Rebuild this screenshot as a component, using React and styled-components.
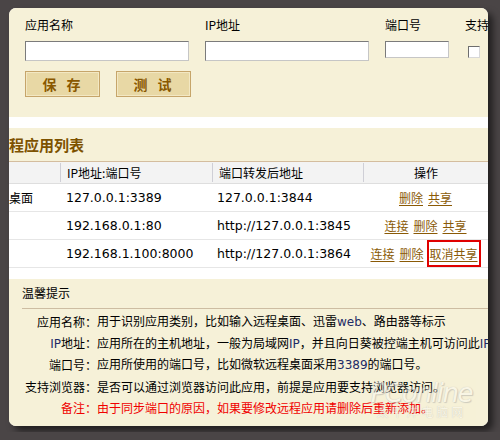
import React from "react";
import styled, { createGlobalStyle } from "styled-components";

const Global = createGlobalStyle`
  html, body { margin: 0; padding: 0; background: #4a4546; }
  body { font-family: "DejaVu Sans", "Noto Sans CJK SC", sans-serif; font-size: 12px; color: #000; }
  #root { padding: 8px 0 0 9px; height: 432px; box-sizing: border-box; overflow: hidden; }
`;

const CJK = `"Noto Sans CJK SC", "DejaVu Sans", sans-serif`;
const LATIN = `"DejaVu Sans", "Noto Sans CJK SC", sans-serif`;
const CREAM = "#f6f1d8";

const Card = styled.div`
  position: relative;
  width: 479px;
  height: 418px;
  border-radius: 7px;
  overflow: hidden;
  background: #fff;
  box-shadow: 5px 5px 7px rgba(0, 0, 0, 0.55);
  display: flex;
  flex-direction: column;
`;

const FormPanel = styled.div`
  height: 109px;
  flex: none;
  box-sizing: border-box;
  background: ${CREAM};
  padding: 9px 0 0 16px;
  display: flex;
  flex-direction: column;
  gap: 10px;
`;

const FieldRow = styled.div`
  display: flex;
  gap: 16px;
  white-space: nowrap;
`;

const Field = styled.div`
  display: flex;
  flex-direction: column;
  gap: 8px;
  align-items: ${(p) => (p.$center ? "flex-start" : "stretch")};
`;

const Label = styled.div`
  font-family: ${CJK};
  font-size: 12px;
  line-height: 16px;
  height: 16px;
`;

const Input = styled.div`
  width: ${(p) => p.$w}px;
  height: ${(p) => p.$h}px;
  box-sizing: border-box;
  background: #fff;
  border: 1px solid;
  border-color: #7b7b7b #c6c6c6 #c6c6c6 #7b7b7b;
`;

const Check = styled.div`
  width: 12px;
  height: 12px;
  margin: 5px 0 0 3px;
  box-sizing: border-box;
  background: #fff;
  border: 1px solid;
  border-color: #6e6e6e #d8d8d8 #d8d8d8 #6e6e6e;
`;

const ButtonRow = styled.div`
  display: flex;
  gap: 16px;
`;

const Button = styled.div`
  width: 75px;
  height: 26px;
  box-sizing: border-box;
  border: 1px solid #c6a56a;
  background: #e8d8a5;
  box-shadow: inset 0 0 0 1px #f3e8c3;
  display: flex;
  align-items: center;
  justify-content: center;
  font-family: ${CJK};
  font-weight: 700;
  font-size: 14px;
  color: #8a5800;
  letter-spacing: 10px;
  padding-left: 8px;
`;

const Heading = styled.div`
  margin-top: 11px;
  margin-left: -29px;
  height: 33px;
  flex: none;
  background: ${CREAM};
  border-bottom: 1px solid #d4bd9e;
  padding-left: 14px;
  display: flex;
  align-items: center;
  font-family: ${CJK};
  font-weight: 700;
  font-size: 15px;
  color: #7d5200;
  white-space: nowrap;
`;

const Table = styled.div`
  margin-left: -29px;
  width: 508px;
  flex: none;
`;

const HeadRow = styled.div`
  display: grid;
  grid-template-columns: 80px 152px 151px 125px;
  height: 21px;
  background: #f3f3f3;
  border-bottom: 1px solid #dedede;
`;

const HeadCell = styled.div`
  display: flex;
  align-items: center;
  justify-content: ${(p) => (p.$center ? "center" : "flex-start")};
  padding-left: ${(p) => (p.$center ? 0 : 6)}px;
  border-left: ${(p) => (p.$first ? "none" : "1px solid #cfcfd6")};
  margin: 1px 0;
  font-family: ${CJK};
  font-size: 12px;
  white-space: nowrap;
`;

const Row = styled.div`
  display: grid;
  grid-template-columns: 80px 152px 151px 125px;
  height: 27px;
  border-bottom: 1px solid #e6e6e6;
  background: #fff;
`;

const Cell = styled.div`
  display: flex;
  align-items: center;
  justify-content: ${(p) => (p.$center ? "center" : "flex-start")};
  padding-left: ${(p) => (p.$center ? 0 : p.$pl ?? 6)}px;
  font-family: ${LATIN};
  font-size: 12.5px;
  white-space: nowrap;
  gap: 5px;
`;

const CjkText = styled.span`
  font-family: ${CJK};
  font-size: 12px;
`;

const Link = styled.span`
  font-family: ${CJK};
  font-size: 12px;
  color: #8a5a06;
  text-decoration: underline;
  text-underline-offset: 2px;
  ${(p) =>
    p.$marked &&
    `
    display: inline-block;
    border: 2px solid #e00000;
    padding: 0 1px;
    line-height: 23px;
    margin-left: -2px;
  `}
`;

const Tips = styled.div`
  margin-top: 11px;
  flex: 1;
  background: ${CREAM};
  padding: 4px 0 0 13px;
  white-space: nowrap;
`;

const TipsTitle = styled.div`
  font-family: ${CJK};
  font-size: 12px;
  line-height: 20px;
  padding-bottom: 5px;
  border-bottom: 1px solid #cdbda2;
  margin-bottom: 2px;
`;

const TipLine = styled.div`
  display: grid;
  grid-template-columns: 75px auto;
  align-items: center;
  height: 21.6px;
  line-height: 16px;
  font-family: ${CJK};
  font-size: 12px;
  color: ${(p) => (p.$red ? "#f00000" : "#000")};
`;

const TipLabel = styled.span`
  text-align: right;
`;

const Latin = styled.span`
  font-family: ${LATIN};
  color: #1d2a66;
`;

const Watermark = styled.div`
  position: absolute;
  right: 16px;
  bottom: 6px;
  display: flex;
  flex-direction: column;
  align-items: center;
  opacity: 0.45;
  pointer-events: none;
`;

const WmBig = styled.div`
  font-family: "DejaVu Sans", sans-serif;
  font-style: italic;
  font-size: 26px;
  letter-spacing: -1.5px;
  color: #fbfbf6;
  text-shadow: 0 0 1px #8a8a8a, 1px 1px 1px #a0a0a0;
`;

const WmSmall = styled.div`
  font-family: ${CJK};
  font-size: 12px;
  letter-spacing: 3px;
  color: #fbfbf6;
  text-shadow: 0 0 1px #8a8a8a;
  margin-top: -5px;
`;

const rows = [
  { name: "远程桌面", ip: "127.0.0.1:3389", fwd: "127.0.0.1:3844", ops: ["删除", "共享"] },
  { name: "", ip: "192.168.0.1:80", fwd: "http://127.0.0.1:3845", ops: ["连接", "删除", "共享"] },
  { name: "", ip: "192.168.1.100:8000", fwd: "http://127.0.0.1:3864", ops: ["连接", "删除", "取消共享"], mark: 2 },
];

export default function App() {
  return (
    <>
      <Global />
      <Card>
        <FormPanel>
          <FieldRow>
            <Field>
              <Label>应用名称</Label>
              <Input $w={164} $h={20} />
            </Field>
            <Field>
              <Label>IP地址</Label>
              <Input $w={164} $h={20} />
            </Field>
            <Field>
              <Label>端口号</Label>
              <Input $w={64} $h={17} />
            </Field>
            <Field $center>
              <Label>支持浏览器</Label>
              <Check />
            </Field>
          </FieldRow>
          <ButtonRow>
            <Button>保存</Button>
            <Button>测试</Button>
          </ButtonRow>
        </FormPanel>

        <Heading>远程应用列表</Heading>

        <Table>
          <HeadRow>
            <HeadCell $first />
            <HeadCell>IP地址:端口号</HeadCell>
            <HeadCell>端口转发后地址</HeadCell>
            <HeadCell $center>操作</HeadCell>
          </HeadRow>
          {rows.map((r, i) => (
            <Row key={i}>
              <Cell $pl={5}>
                <CjkText>{r.name}</CjkText>
              </Cell>
              <Cell>{r.ip}</Cell>
              <Cell $pl={5}>{r.fwd}</Cell>
              <Cell $center>
                {r.ops.map((o, j) => (
                  <Link key={j} $marked={r.mark === j}>
                    {o}
                  </Link>
                ))}
              </Cell>
            </Row>
          ))}
        </Table>

        <Tips>
          <TipsTitle>温馨提示</TipsTitle>
          <TipLine>
            <TipLabel>应用名称：</TipLabel>
            <span>
              用于识别应用类别，比如输入远程桌面、迅雷<Latin>web</Latin>、路由器等标示
            </span>
          </TipLine>
          <TipLine>
            <TipLabel>
              <Latin>IP</Latin>地址：
            </TipLabel>
            <span>
              应用所在的主机地址，一般为局域网<Latin>IP</Latin>，并且向日葵被控端主机可访问此<Latin>IP</Latin>
            </span>
          </TipLine>
          <TipLine>
            <TipLabel>端口号：</TipLabel>
            <span>
              应用所使用的端口号，比如微软远程桌面采用<Latin>3389</Latin>的端口号。
            </span>
          </TipLine>
          <TipLine>
            <TipLabel>支持浏览器：</TipLabel>
            <span>是否可以通过浏览器访问此应用，前提是应用要支持浏览器访问。</span>
          </TipLine>
          <TipLine $red>
            <TipLabel>备注：</TipLabel>
            <span>由于同步端口的原因，如果要修改远程应用请删除后重新添加。</span>
          </TipLine>
        </Tips>

        <Watermark>
          <WmBig>PConline</WmBig>
          <WmSmall>太平洋电脑网</WmSmall>
        </Watermark>
      </Card>
    </>
  );
}
